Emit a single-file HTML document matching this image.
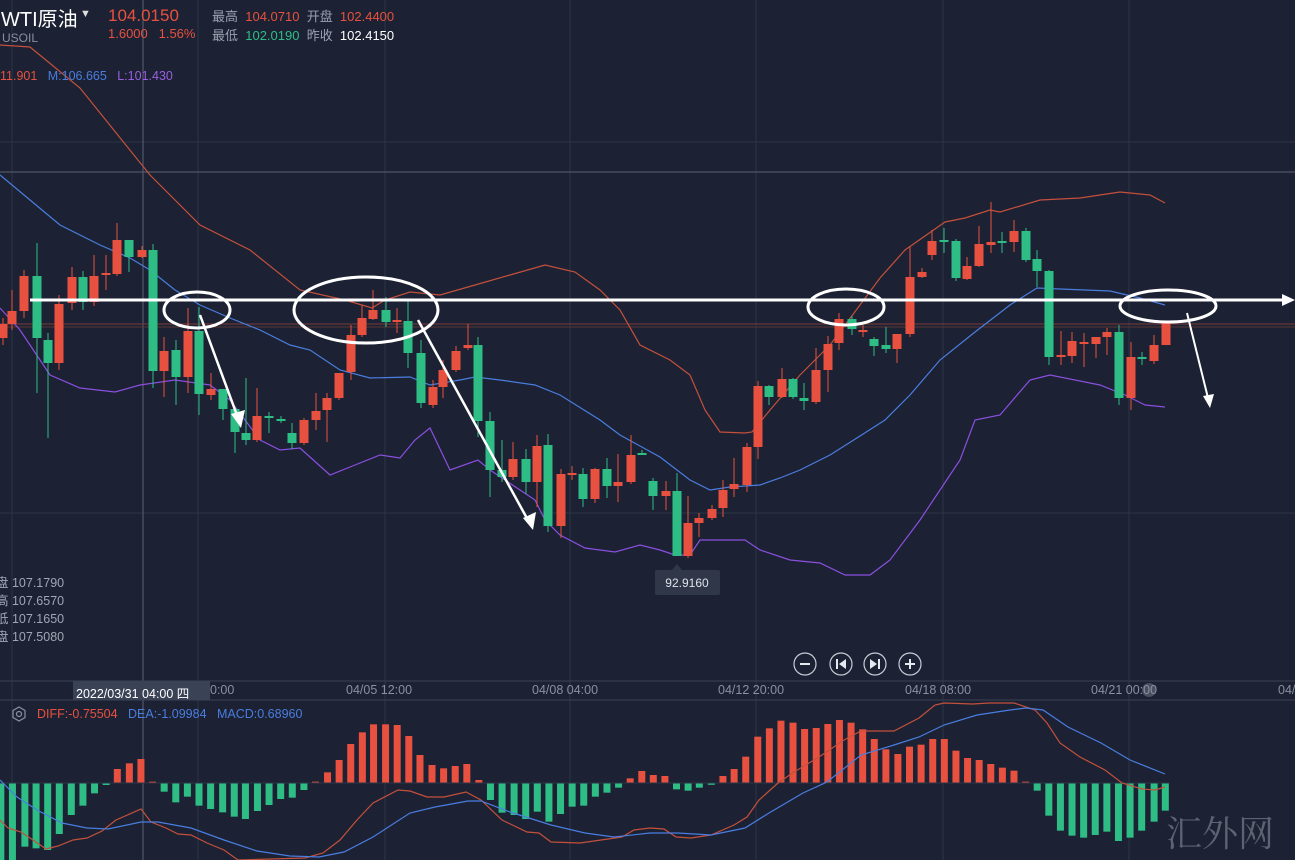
<!DOCTYPE html>
<html><head><meta charset="utf-8"><style>
html,body{margin:0;padding:0;background:#1c2233;width:1295px;height:860px;overflow:hidden;font-family:"Liberation Sans","Noto Sans CJK SC",sans-serif}
svg{position:absolute;left:0;top:0}
.t{position:absolute;white-space:nowrap}
</style></head><body>
<svg id="s" width="1295" height="860" xmlns="http://www.w3.org/2000/svg">
<g stroke="#2c3446" stroke-width="1">
<line x1="12" y1="0" x2="12" y2="860"/><line x1="198" y1="0" x2="198" y2="860"/><line x1="385" y1="0" x2="385" y2="860"/><line x1="570" y1="0" x2="570" y2="860"/><line x1="756" y1="0" x2="756" y2="860"/><line x1="943" y1="0" x2="943" y2="860"/><line x1="1129" y1="0" x2="1129" y2="860"/>
<line x1="0" y1="142" x2="1295" y2="142"/><line x1="0" y1="513" x2="1295" y2="513"/>
</g>
<line x1="0" y1="172" x2="1295" y2="172" stroke="#5a6275"/>
<line x1="143" y1="0" x2="143" y2="860" stroke="#5a6275"/>
<line x1="0" y1="681" x2="1295" y2="681" stroke="#3a4256"/>
<line x1="0" y1="700" x2="1295" y2="700" stroke="#3a4256"/>
<line x1="0" y1="324" x2="1295" y2="324" stroke="#7a3a3a" stroke-width="1"/>
<line x1="0" y1="327" x2="1295" y2="327" stroke="#5a3535" stroke-width="1"/>
<g id="bands" fill="none" stroke-width="1.2">
<polyline stroke="#c4503c" points="0,45 30,47 80,88 150,175 200,225 250,250 300,290 345,300 372,308 385,300 410,292 440,295 475,285 510,275 545,265 575,272 600,290 620,310 640,345 670,360 690,375 705,410 720,432 745,433 752,432 770,410 800,375 830,345 860,305 880,278 905,250 945,222 965,218 990,210 1000,212 1040,200 1080,198 1120,192 1150,195 1165,203"/>
<polyline stroke="#4a7de0" points="0,175 30,200 60,225 100,245 130,258 150,270 175,290 200,305 230,318 260,330 290,345 310,350 340,370 370,378 410,377 430,385 460,380 475,377 500,380 535,385 560,395 600,420 620,435 660,457 690,480 710,490 730,487 760,485 780,478 800,470 830,455 860,436 885,420 910,395 940,360 975,332 1010,305 1037,288 1060,289 1110,291 1140,298 1165,305"/>
<polyline stroke="#8a4fe0" points="0,308 20,330 40,360 50,375 80,388 115,392 140,385 175,380 210,385 230,400 260,440 280,450 300,448 330,475 355,465 380,455 400,458 415,440 430,428 450,470 478,460 490,470 520,490 535,500 545,520 560,535 585,548 615,552 640,545 660,550 675,555 690,555 700,540 745,540 760,550 790,560 820,563 845,575 870,575 890,560 920,520 940,490 960,460 975,420 1000,415 1030,380 1050,375 1100,385 1125,395 1145,405 1165,407"/>
</g>
<g id="cd"></g>
<g id="mb"></g>
<line x1="0" y1="783" x2="1170" y2="783" stroke="#2c3446"/>
<polyline fill="none" stroke="#c4503c" stroke-width="1.2" points="0,820 8,828 21,832 33,840 46,849 58,846 73,840 87,838 102,831 116,820 141,809 151,822 166,828 178,834 191,835 207,843 224,850 238,860 305,858 323,853 340,840 357,820 373,803 398,790 410,791 427,797 444,797 466,792 481,800 502,820 527,832 539,833 551,842 580,843 601,840 622,837 634,830 650,828 664,829 676,837 691,838 711,835 734,825 747,817 759,800 778,783 794,772 819,757 844,740 861,731 894,731 919,718 935,705 944,703 973,704 989,703 1014,703 1035,710 1047,723 1060,743 1080,757 1105,770 1122,783 1142,789 1155,790 1165,787"/>
<polyline fill="none" stroke="#4a7de0" stroke-width="1.2" points="0,780 17,797 37,810 62,823 87,828 108,829 141,822 158,822 191,828 224,840 257,851 290,856 319,857 344,852 373,837 410,813 435,807 468,801 481,801 510,812 551,825 585,833 614,837 650,833 678,833 711,835 745,828 769,813 803,793 827,782 861,755 894,745 919,737 944,725 977,715 1010,710 1026,708 1043,710 1068,727 1101,743 1130,760 1165,774"/>
<!-- annotations -->
<g fill="none" stroke="#fff" stroke-width="3">
<line x1="30" y1="300" x2="1283" y2="300"/>
<ellipse cx="197" cy="310" rx="33" ry="18"/>
<ellipse cx="366" cy="310" rx="72" ry="33"/>
<ellipse cx="846" cy="307" rx="38" ry="18"/>
<ellipse cx="1168" cy="306" rx="48" ry="16"/>
<line x1="200" y1="315" x2="238" y2="418" stroke-width="2.5"/>
<line x1="418" y1="320" x2="529" y2="522" stroke-width="2.5"/>
<line x1="1187" y1="313" x2="1208" y2="398" stroke-width="2"/>
</g>
<g fill="#fff">
<polygon points="1295,300 1282,294 1282,306"/>
<polygon points="241,428 231,414 245,410"/>
<polygon points="533,530 523,518 536,512"/>
<polygon points="1210,408 1203,396 1214,394"/>
</g>
<!-- tooltip -->
<polygon points="672,570 677,564 682,570" fill="#2f3749"/>
<rect x="655" y="570" width="65" height="25" rx="2" fill="#2f3749"/>
<text x="687" y="587" fill="#dfe3ea" font-size="12" text-anchor="middle" font-family="Liberation Sans">92.9160</text>
<!-- buttons -->
<g fill="none" stroke="#c8ccd6" stroke-width="1.2">
<circle cx="805" cy="664" r="11"/><circle cx="841" cy="664" r="11"/><circle cx="875" cy="664" r="11"/><circle cx="910" cy="664" r="11"/>
</g>
<g fill="#e6e9ef">
<rect x="800" y="663" width="10" height="2"/>
<rect x="905" y="663" width="10" height="2"/><rect x="909" y="659" width="2" height="10"/>
<rect x="836" y="659" width="2" height="10"/><polygon points="846,659 846,669 839,664"/>
<rect x="878" y="659" width="2" height="10"/><polygon points="870,659 870,669 877,664"/>
</g>
<circle cx="1149" cy="690" r="7" fill="#6a7080" opacity="0.6"/>
<!-- settings icon -->
<polygon points="19,707 25,710.5 25,717.5 19,721 13,717.5 13,710.5" fill="none" stroke="#8a90a0" stroke-width="1.2"/>
<circle cx="19" cy="714" r="2.5" fill="none" stroke="#8a90a0" stroke-width="1.2"/>
<rect x="73" y="681" width="137" height="19" fill="#3a4256"/>
</svg>
<div class="t" style="left:1px;top:3px;font-size:20px;color:#fff">WTI原油</div>
<div class="t" style="left:80px;top:8px;font-size:11px;color:#ddd">▼</div>
<div class="t" style="left:108px;top:6px;font-size:17px;color:#e8513f">104.0150</div>
<div class="t" style="left:108px;top:26px;font-size:13px;color:#e8513f">1.6000&nbsp;&nbsp;&nbsp;1.56%</div>
<div class="t" style="left:2px;top:31px;font-size:12px;color:#8a90a0">USOIL</div>
<div class="t" style="left:212px;top:6px;font-size:13px;color:#9aa0ae">最高 <span style="color:#e8513f">&nbsp;104.0710</span>&nbsp;&nbsp;开盘 <span style="color:#e8513f">&nbsp;102.4400</span></div>
<div class="t" style="left:212px;top:25px;font-size:13px;color:#9aa0ae">最低 <span style="color:#2dbd85">&nbsp;102.0190</span>&nbsp;&nbsp;昨收 <span style="color:#fff">&nbsp;102.4150</span></div>
<div class="t" style="left:0px;top:69px;font-size:12.5px"><span style="color:#e8513f">11.901</span>&nbsp;&nbsp; <span style="color:#4a7de0">M:106.665</span>&nbsp;&nbsp; <span style="color:#9a5fe0">L:101.430</span></div>
<div class="t" style="left:-4px;top:574px;font-size:12.5px;color:#a0a6b4;line-height:18px">盘 107.1790<br>高 107.6570<br>低 107.1650<br>盘 107.5080</div>
<div class="t" style="left:76px;top:683px;font-size:12.5px;color:#fff">2022/03/31 04:00 四</div>
<div class="t" style="left:210px;top:683px;font-size:12.5px;color:#8a90a0">0:00</div>
<div class="t" style="left:346px;top:683px;font-size:12.5px;color:#8a90a0">04/05 12:00</div>
<div class="t" style="left:532px;top:683px;font-size:12.5px;color:#8a90a0">04/08 04:00</div>
<div class="t" style="left:718px;top:683px;font-size:12.5px;color:#8a90a0">04/12 20:00</div>
<div class="t" style="left:905px;top:683px;font-size:12.5px;color:#8a90a0">04/18 08:00</div>
<div class="t" style="left:1091px;top:683px;font-size:12.5px;color:#8a90a0">04/21 00:00</div>
<div class="t" style="left:1278px;top:683px;font-size:12.5px;color:#8a90a0">04/</div>
<div class="t" style="left:37px;top:707px;font-size:12.5px"><span style="color:#e8513f">DIFF:-0.75504</span>&nbsp;&nbsp; <span style="color:#4a7de0">DEA:-1.09984</span>&nbsp;&nbsp; <span style="color:#4a7de0">MACD:0.68960</span></div>
<div class="t" style="left:1166px;top:806px;font-size:36px;color:#5d6371;font-family:'Noto Serif CJK SC',serif">汇外网</div>
<script>
var R="#e8513f",G="#2dbd85",ns="http://www.w3.org/2000/svg";
var C=[[3,324,338,318,345,'r'],[12,311,324,290,330,'r'],[24,276,311,270,318,'r'],[37,276,338,243,393,'g'],[48,340,363,333,438,'g'],[59,304,363,295,370,'r'],[72,277,303,267,310,'r'],[83,277,302,271,310,'g'],[94,276,302,255,306,'r'],[106,273,275,255,290,'r'],[117,240,274,223,276,'r'],[129,240,257,240,272,'g'],[142,250,257,246,258,'r'],[153,250,371,244,388,'g'],[164,351,371,337,397,'r'],[176,350,377,340,405,'g'],[188,331,377,308,393,'r'],[199,331,394,307,415,'g'],[211,389,395,373,400,'r'],[223,389,409,389,420,'g'],[235,409,432,407,453,'g'],[246,433,440,378,445,'g'],[257,416,440,388,442,'r'],[269,416,418,412,433,'g'],[281,419,421,416,423,'g'],[292,433,443,423,449,'g'],[304,420,443,418,445,'r'],[316,411,420,393,430,'r'],[327,398,410,393,442,'r'],[339,373,398,373,400,'r'],[351,335,372,325,380,'r'],[362,318,335,305,337,'r'],[373,310,319,290,320,'r'],[386,310,322,297,327,'g'],[397,320,322,308,333,'r'],[408,321,353,300,368,'g'],[421,353,403,340,408,'g'],[433,387,405,380,408,'r'],[443,370,387,360,398,'r'],[456,351,370,346,372,'r'],[468,345,348,324,350,'r'],[478,345,421,337,437,'g'],[490,421,470,412,497,'g'],[502,470,477,440,482,'g'],[513,459,477,442,480,'r'],[526,459,482,449,494,'g'],[537,446,482,435,507,'r'],[548,445,526,434,532,'g'],[561,474,526,469,538,'r'],[572,473,475,466,480,'r'],[583,474,499,468,507,'g'],[595,469,499,468,503,'r'],[607,469,486,458,498,'g'],[618,482,486,454,502,'r'],[631,455,482,435,484,'r'],[642,453,455,450,455,'g'],[653,481,496,478,510,'g'],[666,491,496,481,510,'r'],[677,491,556,473,556,'g'],[688,523,556,496,558,'r'],[699,518,523,513,537,'r'],[712,509,518,505,520,'r'],[723,490,508,480,517,'r'],[734,484,489,458,497,'r'],[747,447,485,443,492,'r'],[758,386,447,381,459,'r'],[769,386,397,385,405,'g'],[782,379,397,368,398,'r'],[793,379,397,378,399,'g'],[804,398,401,383,410,'g'],[816,370,402,348,404,'r'],[828,344,370,336,392,'r'],[839,319,343,313,350,'r'],[852,319,329,316,335,'g'],[863,330,332,325,337,'r'],[874,339,346,337,356,'g'],[886,345,349,327,353,'g'],[897,334,349,334,363,'r'],[910,277,334,247,337,'r'],[922,272,277,268,278,'r'],[932,241,255,230,260,'r'],[944,240,242,228,253,'g'],[956,241,278,239,281,'g'],[967,266,279,257,280,'r'],[979,244,266,226,267,'r'],[991,242,245,202,253,'r'],[1002,241,243,232,253,'g'],[1014,231,242,220,252,'r'],[1026,231,260,228,262,'g'],[1037,259,271,250,287,'g'],[1049,271,357,270,365,'g'],[1061,355,357,331,365,'r'],[1072,341,356,332,363,'r'],[1084,342,344,333,367,'r'],[1096,337,344,337,358,'r'],[1107,332,337,328,355,'r'],[1119,332,398,325,405,'g'],[1131,357,398,342,410,'r'],[1142,357,359,352,365,'g'],[1154,345,361,335,364,'r'],[1166,323,345,322,345,'r']];
function el(p,t,a){var e=document.createElementNS(ns,t);for(var k in a)e.setAttribute(k,a[k]);p.appendChild(e);}
var cd=document.getElementById('cd');
C.forEach(function(c){var col=c[5]=='r'?R:G;el(cd,'rect',{x:c[0]-0.5,y:c[3],width:1,height:c[4]-c[3],fill:col});var h=Math.max(1.5,c[2]-c[1]);el(cd,'rect',{x:c[0]-4.5,y:c[1],width:9,height:h,fill:col});});
var M1=[[2,700],[30,660],[60,620],[87,625],[115,630],[143,582],[172,525],[200,497],[228,460],[256,435],[283,387],[312,370],[340,357],[368,425],[396,455],[424,487],[452,470],[480,497],[508,507],[537,517],[565,530],[592,537],[621,513],[649,495],[677,477],[705,473],[733,450],[761,425],[790,397],[818,360],[846,312],[874,277],[901,253],[930,253],[958,255],[986,288],[1013,345],[1042,375],[1070,385],[1098,378],[1126,372],[1155,420],[1183,480],[1211,518],[1240,525],[1268,537],[1296,515],[1324,545],[1352,522],[1380,500],[1408,497],[1436,470],[1464,458],[1492,443],[1520,415],[1548,393]];
var M2=[[20,405],[48,408],[76,448],[104,452],[131,443],[160,433],[188,408],[215,387],[243,350],[272,290],[300,265],[328,242],[357,248],[385,267],[413,264],[441,252],[469,240],[497,248],[525,268],[553,297],[581,328],[610,342],[638,320],[666,314],[694,297],[722,297],[750,332],[778,354],[806,360],[834,372],[862,383],[890,392],[918,425],[946,452],[974,527],[1002,572],[1030,587],[1058,593],[1086,585],[1114,575],[1142,603],[1170,593],[1198,572],[1228,545],[1255,512]];
var mb=document.getElementById('mb'),Z=783.3;
function bar(x,zy){var y=640+zy/3;var top=Math.min(y,Z),h=Math.max(1.5,Math.abs(y-Z));el(mb,'rect',{x:x-3.5,y:top,width:7,height:h,fill:y<Z?R:G});}
M1.forEach(function(m){bar(m[0]/2.412,m[1]);});
M2.forEach(function(m){bar(645+m[0]/2.412,m[1]);});
</script>
</body></html>
